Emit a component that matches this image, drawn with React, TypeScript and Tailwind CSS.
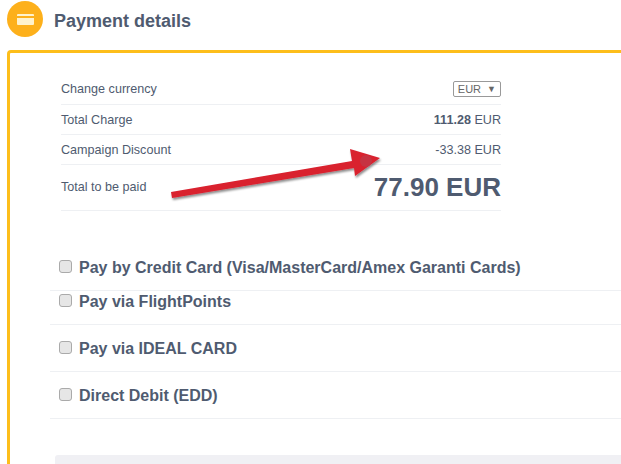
import React from 'react';

const font = { fontFamily: '"Liberation Sans", Arial, sans-serif' };

const methods = [
  { label: 'Pay by Credit Card (Visa/MasterCard/Amex Garanti Cards)', cls: 'h-[35px] pt-[2px]' },
  { label: 'Pay via FlightPoints', cls: 'h-[34px] pt-[1px]' },
  { label: 'Pay via IDEAL CARD', cls: 'h-[47px] pt-[14px]' },
  { label: 'Direct Debit (EDD)', cls: 'h-[47px] pt-[14px]' },
];

function Arrow() {
  return (
    <svg className="absolute left-[160px] top-[140px]" width="240" height="70" viewBox="0 0 240 70">
      <defs>
        <filter id="sh" x="-10%" y="-30%" width="120%" height="170%">
          <feDropShadow dx="1" dy="2" stdDeviation="1.2" floodColor="#000" floodOpacity="0.45" />
        </filter>
      </defs>
      <path d="M11 52 L192 21 L190 9 L220 18 L195 36 L194 28 L12 58 Z" fill="#d9202f" filter="url(#sh)" />
      <ellipse cx="206" cy="21" rx="6" ry="6" fill="#b9404f" opacity="0.6" />
    </svg>
  );
}

export default function App() {
  return (
    <div className="relative w-[621px] h-[464px] overflow-hidden bg-white text-[#4f5b70]" style={font}>
      <div className="flex items-start h-[38px] pl-[7px] pt-px gap-[11px]">
        <div className="flex items-center justify-center w-9 h-9 rounded-full bg-[#fdb01b]">
          <svg width="17" height="11" viewBox="0 0 17 11">
            <rect x="0" y="0" width="17" height="11" rx="1" fill="#fff2cc" />
            <rect x="0" y="2" width="17" height="2" fill="#fdb01b" />
          </svg>
        </div>
        <h1 className="text-lg font-bold leading-[22px] mt-[9px]">Payment details</h1>
      </div>

      <div className="ml-[7px] mt-3 w-[640px] h-[430px] border-l-[3px] border-t-[3px] border-[#fdbe1b] rounded-tl-[4px]">
        <div className="ml-[51px] w-[440px] pt-[18px] text-[12.6px]">
          <div className="flex items-start justify-between pt-[9px] h-[34px] border-b border-[#eef0f3]">
            <span className="leading-[18px]">Change currency</span>
            <span className="flex items-center gap-[6px] h-[16px] pl-[4px] pr-[4px] border border-[#999] rounded-[2px] text-[11px] text-[#666] mt-[1px]">
              EUR <span className="text-[9px] leading-none">▼</span>
            </span>
          </div>
          <div className="flex items-center justify-between pt-[2px] h-[30px] border-b border-[#eef0f3]">
            <span>Total Charge</span>
            <span><b>111.28</b> EUR</span>
          </div>
          <div className="flex items-center justify-between pt-[2px] h-[30px] border-b border-[#eef0f3]">
            <span>Campaign Discount</span>
            <span>-33.38 EUR</span>
          </div>
          <div className="flex items-center justify-between h-[46px] border-b border-[#eef0f3]">
            <span>Total to be paid</span>
            <span className="text-[26px] font-bold">77.90 EUR</span>
          </div>
        </div>

        <div className="ml-[40px] mt-[45px]">
          {methods.map(m => (
            <div key={m.label} className={`flex items-start gap-[7px] pl-[9px] border-b border-[#eef0f3] ${m.cls}`}>
              <input type="checkbox" className="appearance-none w-[13px] h-[13px] mt-[2px] bg-[#e6e6e6] border border-[#aaa] rounded-[3px]" />
              <span className="text-base font-bold leading-[20px]">{m.label}</span>
            </div>
          ))}
        </div>

        <div className="ml-[45px] mt-[36px] h-10 bg-[#f0f0f4] rounded-[3px]" />
      </div>
      <Arrow />
    </div>
  );
}
